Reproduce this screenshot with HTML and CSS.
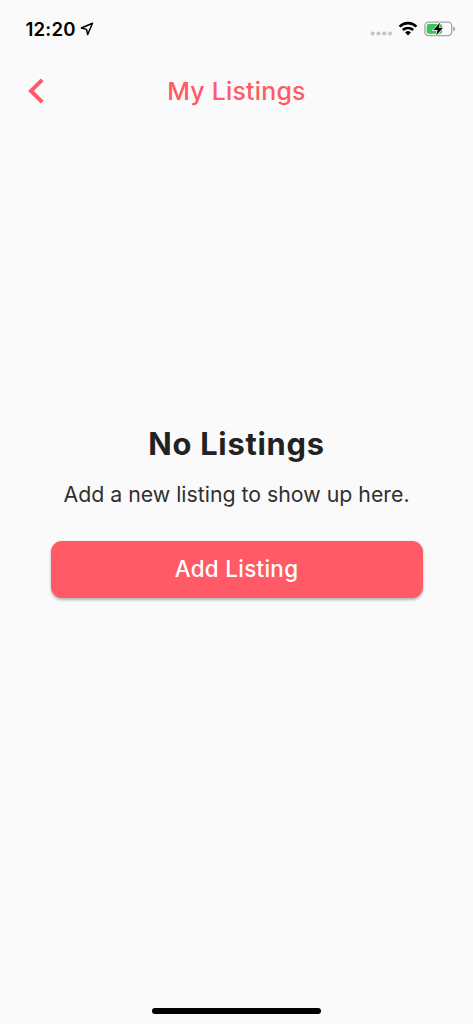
FILE: index.html
```html
<!DOCTYPE html>
<html lang="en">
<head>
<meta charset="utf-8">
<meta name="viewport" content="width=device-width, initial-scale=1">
<title>My Listings</title>
<link rel="stylesheet" href="styles.css">
</head>
<body>
<div class="screen">
  <div class="status-bar">
    <div class="clock">
      <span class="time">12:20</span>
      <svg class="location" width="14" height="14" viewBox="0 0 14 14"><path d="M12.5 1.2 1.4 6l5.1 1.4 1.2 5.1z" fill="none" stroke="#000" stroke-width="1.5" stroke-linejoin="round"/></svg>
    </div>
    <div class="indicators">
      <svg class="signal" width="23" height="5" viewBox="0 0 23 5" fill="#c4c4c4"><circle cx="2.7" cy="2.5" r="2.1"/><circle cx="8.5" cy="2.5" r="2.1"/><circle cx="14.3" cy="2.5" r="2.1"/><circle cx="20.1" cy="2.5" r="2.1"/></svg>
      <svg class="wifi" width="20" height="15" viewBox="0 0 20 15" fill="none" stroke="#000" stroke-width="2.6"><path d="M1.6 5.6a12 12 0 0 1 16.8 0"/><path d="M4.8 9a7.6 7.6 0 0 1 10.4 0"/><path d="M10 14.5 7.1 11.5a4.2 4.2 0 0 1 5.8 0z" fill="#000" stroke="none"/></svg>
      <svg class="battery" width="32" height="16" viewBox="0 0 32 16"><rect x=".9" y="1.2" width="26.8" height="13.4" rx="3.7" fill="none" stroke="#a5a5a5" stroke-width="1.3"/><path d="M29.2 5.5q2 .8 2 2.4t-2 2.4z" fill="#a5a5a5"/><rect x="2.7" y="3" width="15.4" height="9.8" rx="2" fill="#34c759"/><path d="M16.2 1.4 9.3 9h4.3l-1.5 5.5L19 6.8h-4.3z" fill="#000" stroke="#fafafa" stroke-width="1.4" paint-order="stroke"/></svg>
    </div>
  </div>
  <header class="nav">
    <button class="back" aria-label="Back"><svg width="18" height="26" viewBox="0 0 18 26"><path d="M15.2 1.9 3.9 13l11.3 11.1" fill="none" stroke="#ff5a66" stroke-width="4"/></svg></button>
    <h1 class="title">My Listings</h1>
  </header>
  <main class="empty">
    <h2 class="heading">No Listings</h2>
    <p class="message">Add a new listing to show up here.</p>
    <button class="add">Add Listing</button>
  </main>
  <div class="home-indicator"></div>
</div>
</body>
</html>
```

FILE: styles.css
```css
* { box-sizing: border-box; }
body { margin: 0; background: #fafafa; font-family: Inter, "Liberation Sans", sans-serif; }
button { border: 0; padding: 0; background: none; font: inherit; }
svg { display: block; }
.screen { display: flex; flex-direction: column; height: 1024px; overflow: hidden; }
.status-bar { display: flex; justify-content: space-between; height: 56px; padding: 17px 17px 0 25.5px; }
.clock { display: flex; align-items: flex-start; gap: 4px; height: 24px; }
.time { color: #000; font-size: 18.6px; line-height: 24px; font-weight: 600; letter-spacing: .2px; white-space: nowrap; }
.location { margin-top: 5px; }
.indicators { display: flex; align-items: flex-start; }
.signal { margin-top: 14px; }
.wifi { margin: 4px 0 0 5px; }
.battery { margin: 4px 0 0 6px; }
.nav { display: grid; grid-template-columns: 47px 1fr 47px; height: 70px; align-items: center; }
.back { justify-self: end; width: 20px; height: 26px; }
.title { margin: 0; color: #ff5a66; font-size: 24.8px; line-height: 32px; font-weight: 500; letter-spacing: .25px; text-align: center; white-space: nowrap; }
.empty { flex: 1; padding: 298px 50px 0; text-align: center; }
.heading { margin: 0; color: #222; font-size: 30.8px; line-height: 40px; font-weight: 700; letter-spacing: .75px; white-space: nowrap; }
.message { margin: 15px 0 0; color: #303030; font-size: 21.3px; line-height: 30px; letter-spacing: 0; white-space: nowrap; }
.add { display: block; width: 372px; height: 57px; margin: 31.5px auto 0; border-radius: 11px; background: #ff5a66; color: #fff; font-size: 22.4px; line-height: 56px; font-weight: 500; letter-spacing: .3px; box-shadow: 0 1.5px 3px rgba(0, 0, 0, .28); }
.home-indicator { width: 169px; height: 6px; margin: 0 auto 10px; border-radius: 3px; background: #000; }
```
